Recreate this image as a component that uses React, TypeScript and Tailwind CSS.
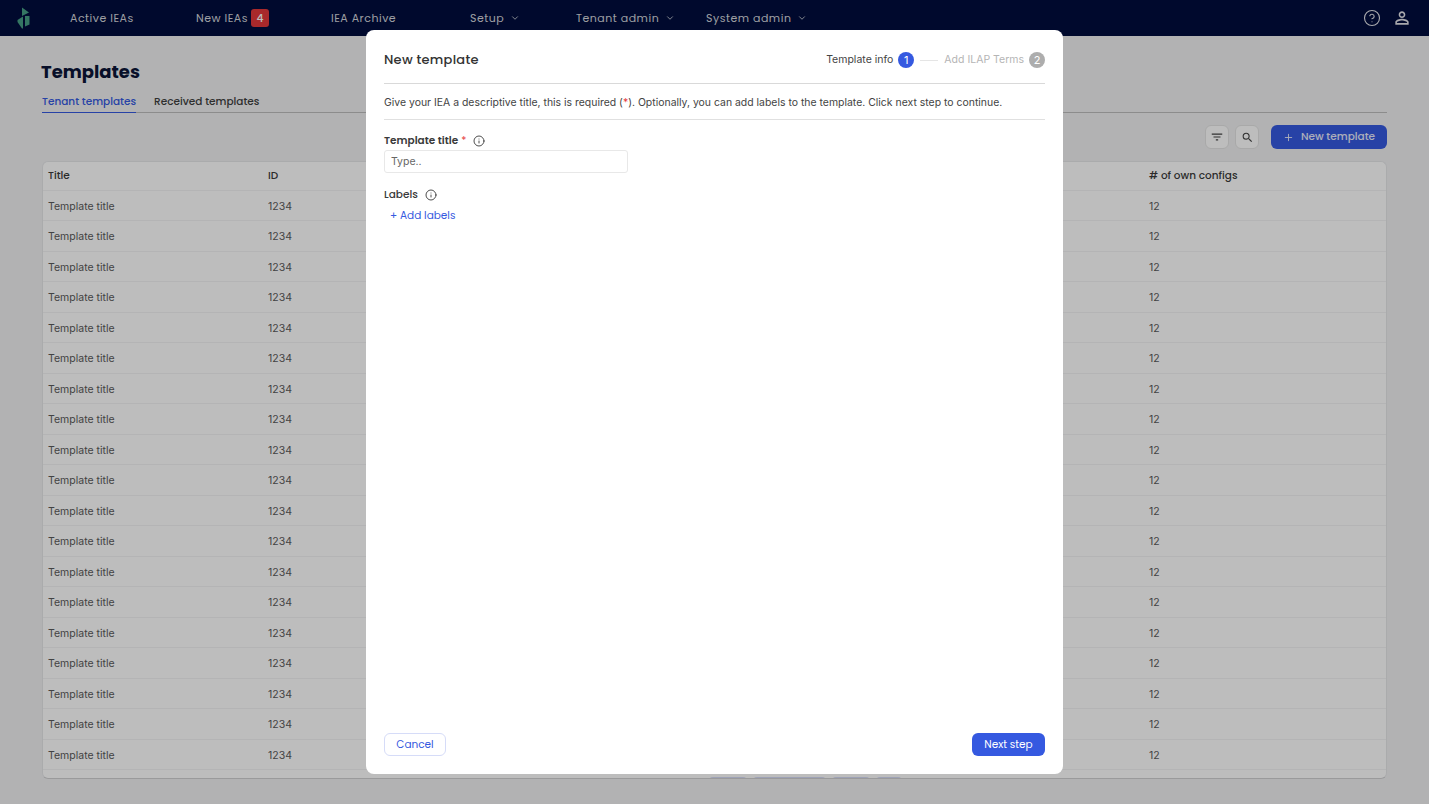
import React from 'react';
import { ChevronDown, CircleHelp, Info, Plus } from 'lucide-react';

const rows = Array.from({ length: 19 });

const poppins = "font-['Poppins','Inter',sans-serif]";

const NavItem: React.FC<{ label: string; className: string; menu?: boolean }> = ({ label, className, menu }) => (
  <div className={`flex items-center gap-[6px] text-[11px] tracking-[0.5px] text-[#d4d6dc] ${poppins} ${className}`}>
    {label}
    {menu && <ChevronDown size={10} strokeWidth={2} />}
  </div>
);

const Row: React.FC<{ head?: boolean }> = ({ head }) => (
  <div
    className={`grid grid-cols-[220px_220px_220px_220px_221px_1fr] pl-[5px] items-center border-b border-[#f3f3f4] ${
      head ? `h-[28.5px] text-[10.5px] font-medium text-[#3b3b3b] ${poppins}` : 'h-[30.5px] pt-[3px] text-[10.5px] text-[#5a5a5a]'
    }`}
  >
    <div>{head ? 'Title' : 'Template title'}</div>
    <div>{head ? 'ID' : '1234'}</div>
    <div />
    <div />
    <div />
    <div>{head ? '# of own configs' : '12'}</div>
  </div>
);

export default function App() {
  return (
    <div className="relative h-[804px] w-[1429px] overflow-hidden bg-[#f0f1f2] font-['Inter',sans-serif]">
      <nav className="flex h-9 items-center bg-[#000d3d]">
        <svg width="14" height="22" viewBox="0 0 14 22" className="ml-[17px] mr-[39px]">
          <path d="M5 0.5 L12 5.5 L5 9 Z" fill="#479f86" />
          <path d="M0.5 13 L6 9.5 L6 21.5 L5 21.5 L0.5 15 Z" fill="#479f86" />
          <path d="M8 9 H12.5 V17.5 L8 19.5 Z" fill="#479f86" />
        </svg>
        <NavItem label="Active IEAs" className="w-[126px]" />
        <div className="flex w-[135px] items-center gap-[3px]">
          <NavItem label="New IEAs" className="" />
          <span className="flex h-[18px] w-[18px] items-center justify-center rounded-[3px] bg-[#e5383b] text-[11px] font-medium text-white">
            4
          </span>
        </div>
        <NavItem label="IEA Archive" className="w-[139px]" />
        <NavItem label="Setup" className="w-[106px]" menu />
        <NavItem label="Tenant admin" className="w-[130px]" menu />
        <NavItem label="System admin" className="" menu />
        <div className="ml-auto mr-[17px] flex items-center gap-[11px] text-[#e4e5ea]">
          <CircleHelp size={18} strokeWidth={1.5} />
          <svg width="20" height="20" viewBox="0 0 24 24" fill="currentColor">
            <path d="M12 5.9c1.16 0 2.1.94 2.1 2.1s-.94 2.1-2.1 2.1S9.9 9.16 9.9 8s.94-2.1 2.1-2.1m0 9c2.97 0 6.1 1.46 6.1 2.1v1.1H5.9V17c0-.64 3.13-2.1 6.1-2.1M12 4C9.79 4 8 5.79 8 8s1.79 4 4 4 4-1.79 4-4-1.79-4-4-4zm0 9c-2.67 0-8 1.34-8 4v3h16v-3c0-2.66-5.33-4-8-4z" />
          </svg>
        </div>
      </nav>

      <main className="px-[42px]">
        <h1 className={`mt-[25px] -ml-px text-[18px] leading-[22px] font-bold text-[#0c1538] ${poppins}`}>Templates</h1>
        <div className={`mt-[8px] flex h-[22px] gap-[18px] border-b border-[#bdbdbd] text-[10.5px] font-medium ${poppins}`}>
          <div className="h-[22px] border-b border-[#3559e0] pt-[3px] text-[#3559e0]">Tenant templates</div>
          <div className="pt-[3px] text-[#3f3f3f]">Received templates</div>
        </div>
        <div className="mt-[12px] flex h-[24px] items-center justify-end">
          <button className="mr-[6px] flex h-6 w-6 items-center justify-center rounded-[6px] border border-[#e4e4e4] bg-white text-[#444]">
            <svg width="14" height="14" viewBox="0 0 24 24" fill="currentColor">
              <path d="M10 18h4v-2h-4v2zM3 6v2h18V6H3zm3 7h12v-2H6v2z" />
            </svg>
          </button>
          <button className="mr-[12px] flex h-6 w-6 items-center justify-center rounded-[6px] border border-[#e4e4e4] bg-white text-[#444]">
            <svg width="13" height="13" viewBox="0 0 24 24" fill="currentColor">
              <path d="M15.5 14h-.79l-.28-.27A6.47 6.47 0 0 0 16 9.5 6.5 6.5 0 1 0 9.5 16c1.61 0 3.09-.59 4.23-1.57l.27.28v.79l5 4.99L20.49 19l-4.99-5zm-6 0C7.01 14 5 11.99 5 9.5S7.01 5 9.5 5 14 7.01 14 9.5 11.99 14 9.5 14z" />
            </svg>
          </button>
          <button className={`flex h-6 w-[116px] items-center justify-center gap-[7px] rounded-[6px] bg-[#3559e0] text-[10.5px] font-medium text-[#e8ebfb] ${poppins}`}>
            <Plus size={11} />
            New template
          </button>
        </div>
        <div className="mt-[12px] h-[618px] overflow-hidden rounded-[6px] border border-[#e6e7e9] border-b-[#d0d0d2] bg-white">
          <Row head />
          <div>
            {rows.map((_, i) => (
              <Row key={i} />
            ))}
          </div>
          <div className="mt-[7px] ml-[666px] flex gap-[6px]">
            <div className="h-6 w-[38px] rounded-[4px] bg-[#d6dbf6]" />
            <div className="h-6 w-[73px] rounded-[4px] bg-[#d6dbf6]" />
            <div className="h-6 w-[38px] rounded-[4px] bg-[#d6dbf6]" />
            <div className="h-6 w-[26px] rounded-[4px] bg-[#d6dbf6]" />
          </div>
        </div>
      </main>

      <div className="absolute inset-0 bg-black/[0.26]" />

      <div className="absolute left-[366px] top-[30px] flex h-[744px] w-[697px] flex-col rounded-[8px] bg-white px-[18px] pb-[18px]">
        <div className="flex h-[54px] shrink-0 items-center justify-between border-b border-[#d9d9d9] pt-[7px]">
          <h2 className={`text-[13px] font-medium tracking-[0.25px] text-[#333] ${poppins}`}>New template</h2>
          <div className="flex items-center text-[10.5px]">
            <span className="text-[#444]">Template info</span>
            <span className="ml-[5px] flex h-4 w-4 items-center justify-center rounded-full bg-[#3559e0] text-[11px] text-white">1</span>
            <span className="mx-[6px] h-px w-[18px] bg-[#e5e5e5]" />
            <span className="text-[#b5b5b5]">Add ILAP Terms</span>
            <span className="ml-[5px] flex h-4 w-4 items-center justify-center rounded-full bg-[#adadad] text-[11px] text-white">2</span>
          </div>
        </div>
        <p className="flex h-[36px] shrink-0 items-center border-b border-[#e0e0e0] pt-[3px] text-[10.45px] text-[#444]">
          <span>
            Give your IEA a descriptive title, this is required (<span className="text-[#e5383b]">*</span>). Optionally, you can add labels to the template. Click next step to continue.
          </span>
        </p>
        <div className={`mt-[14px] flex h-[14px] items-center text-[10.5px] font-semibold text-[#3a3a3a] ${poppins}`}>
          Template title <span className="ml-[3px] font-normal text-[#e5383b]">*</span>
          <Info size={12} strokeWidth={1.75} className="ml-[7px] text-[#333]" />
        </div>
        <div className="mt-[2px] flex h-[23px] w-[244px] items-center rounded-[3px] border border-[#e8e8e8] pl-[6px] text-[10.5px] text-[#666]">
          Type..
        </div>
        <div className={`mt-[15px] flex h-[14px] items-center text-[10.5px] font-medium text-[#3a3a3a] ${poppins}`}>
          Labels
          <Info size={12} strokeWidth={1.75} className="ml-[7px] text-[#333]" />
        </div>
        <div className={`mt-[7px] pl-[6px] text-[10.5px] leading-[14px] text-[#3559e0] ${poppins}`}>+ Add labels</div>
        <div className={`mt-auto flex items-center justify-between ${poppins}`}>
          <button className="h-[23px] w-[62px] rounded-[6px] border border-[#d6dcf8] text-[10.5px] text-[#3559e0]">Cancel</button>
          <button className="h-[23px] w-[73px] rounded-[6px] bg-[#3559e0] text-[10.5px] text-white">Next step</button>
        </div>
      </div>
    </div>
  );
}
